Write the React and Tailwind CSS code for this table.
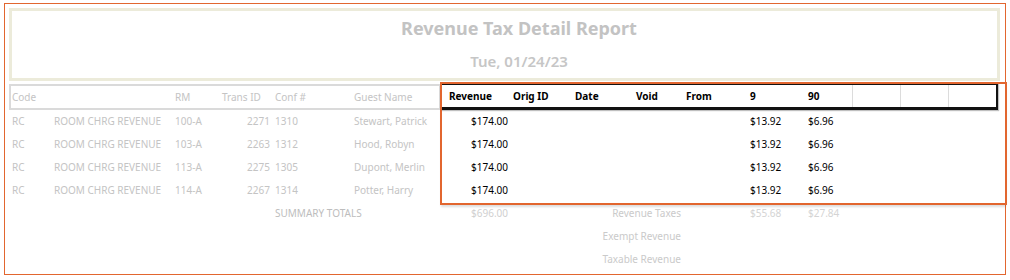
import React from "react";

const rows = [
  ["RC", "ROOM CHRG REVENUE", "100-A", "2271", "1310", "Stewart, Patrick"],
  ["RC", "ROOM CHRG REVENUE", "103-A", "2263", "1312", "Hood, Robyn"],
  ["RC", "ROOM CHRG REVENUE", "113-A", "2275", "1305", "Dupont, Merlin"],
  ["RC", "ROOM CHRG REVENUE", "114-A", "2267", "1314", "Potter, Harry"],
];

export default function App() {
  return (
    <div className="w-[1010px] h-[280px] bg-white pt-[3px] pl-[4px] text-[10px] text-[#c4c4c4]" style={{ fontFamily: '"Noto Sans", "DejaVu Sans", sans-serif' }}>
      <div className="relative w-[1002px] h-[272px] border border-[#e2662f]">
        {/* Report header */}
        <div className="ml-[4px] mt-[4px] w-[991px] h-[73px] border-[3px] border-[#ecebda] flex flex-col items-center pl-[29px] pt-[5px]">
          <div className="text-[18px] leading-[24px] font-bold text-[#c3c3c3]">Revenue Tax Detail Report</div>
          <div className="mt-[11px] text-[15px] leading-[20px] font-semibold text-[#c6c6c6]">Tue, 01/24/23</div>
        </div>

        {/* Column header */}
        <div className="ml-[4px] mt-[2px] flex h-[27px]">
          <div className="w-[432px] h-[26px] mt-[1px] border-2 border-[#dadada] flex items-center">
            <div className="w-[40px] pl-[1px]">Code</div>
            <div className="w-[121px]"></div>
            <div className="w-[47px] pl-[3px]">RM</div>
            <div className="w-[53px] pl-[3px]">Trans ID</div>
            <div className="w-[79px] pl-[3px]">Conf #</div>
            <div className="w-[88px] pl-[3px]">Guest Name</div>
          </div>
          <div className="w-[557px] h-[27px] border-t-2 border-b-[3px] border-r-2 border-[#111] flex items-stretch font-bold text-black shadow-[1px_1px_1px_#00000040]">
            <div className="w-[69px] pl-[8px] flex items-center">Revenue</div>
            <div className="w-[62px] pl-[3px] flex items-center">Orig ID</div>
            <div className="w-[61px] pl-[3px] flex items-center">Date</div>
            <div className="w-[50px] pl-[3px] flex items-center">Void</div>
            <div className="w-[64px] pl-[3px] flex items-center">From</div>
            <div className="w-[58px] pl-[3px] flex items-center">9</div>
            <div className="w-[47px] pl-[3px] flex items-center">90</div>
            <div className="w-[48px] border-l border-[#dcdcdc]"></div>
            <div className="w-[48px] border-l border-[#dcdcdc]"></div>
            <div className="w-[48px] border-l border-[#dcdcdc]"></div>
          </div>
        </div>

        {/* Data rows */}
        <div className="ml-[4px]">
          {rows.map((r, i) => (
            <div key={i} className="flex h-[23px] items-center">
              <div className="w-[42px] pl-[3px]">{r[0]}</div>
              <div className="w-[121px] pl-[3px]">{r[1]}</div>
              <div className="w-[47px] pl-[3px]">{r[2]}</div>
              <div className="w-[53px] pr-[2px] text-right">{r[3]}</div>
              <div className="w-[79px] pl-[3px]">{r[4]}</div>
              <div className="w-[90px] pl-[3px] whitespace-nowrap">{r[5]}</div>
              <div className="w-[69px] pr-[2px] text-right text-black">$174.00</div>
              <div className="w-[62px]"></div>
              <div className="w-[61px]"></div>
              <div className="w-[50px]"></div>
              <div className="w-[64px]"></div>
              <div className="w-[58px] pl-[3px] text-black">$13.92</div>
              <div className="w-[47px] pl-[3px] text-black">$6.96</div>
            </div>
          ))}

          {/* Summary */}
          <div className="flex h-[23px] items-center">
            <div className="w-[263px]"></div>
            <div className="w-[169px] pl-[3px] whitespace-nowrap text-[#bdbdbd]">SUMMARY TOTALS</div>
            <div className="w-[69px] pr-[2px] text-right text-[#d0d0d0]">$696.00</div>
            <div className="w-[173px] pr-[2px] text-right whitespace-nowrap overflow-hidden text-[#cacaca]">Revenue Taxes</div>
            <div className="w-[64px]"></div>
            <div className="w-[58px] pl-[3px] text-[#d4d4d4]">$55.68</div>
            <div className="w-[47px] pl-[3px] text-[#d4d4d4]">$27.84</div>
          </div>
          <div className="flex h-[23px] items-center">
            <div className="w-[501px]"></div>
            <div className="w-[173px] pr-[2px] text-right text-[#cacaca]">Exempt Revenue</div>
          </div>
          <div className="flex h-[23px] items-center">
            <div className="w-[501px]"></div>
            <div className="w-[173px] pr-[2px] text-right text-[#cacaca]">Taxable Revenue</div>
          </div>
        </div>

        {/* Selection highlight overlay */}
        <div className="absolute left-[435px] top-[78px] w-[567px] h-[123px] border-2 border-[#e2662f] shadow-[0_3px_2px_-1px_#00000022]"></div>
      </div>
    </div>
  );
}
